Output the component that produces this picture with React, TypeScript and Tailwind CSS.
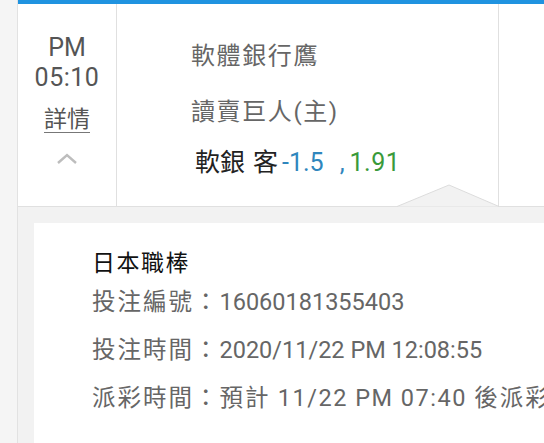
import React from "react";

const font = { fontFamily: "Roboto, 'Noto Sans CJK TC', sans-serif" };

const BetDetail = () => {
  return (
    <div className="flex w-[544px] h-[443px] overflow-hidden bg-[#f4f4f4]" style={font}>
      {/* left page edge */}
      <div className="w-[18px] shrink-0 bg-[#f5f5f5] border-r border-[#e2e2e2]" />

      <div className="flex-1 flex flex-col min-w-0">
        {/* match row */}
        <div className="flex h-[207px] shrink-0 bg-white border-t-4 border-[#1f93e0] border-b border-b-[#e0e0e0]">
          <div className="w-[99px] shrink-0 flex flex-col items-center pt-[29px] border-r border-[#e0e0e0] text-[#555]">
            <div className="text-[25px] leading-[30px]">PM</div>
            <div className="text-[25px] leading-[30px] tracking-[0.5px]">05:10</div>
            <div className="mt-[12px] text-[23px] leading-[30px] underline underline-offset-[5px] decoration-1 decoration-[#777]">詳情</div>
            <svg className="mt-[18px]" width="22" height="12" viewBox="0 0 22 12">
              <path d="M2 10 L11 2 L20 10" fill="none" stroke="#bdbdbd" strokeWidth="2.4" />
            </svg>
          </div>

          <div className="relative w-[382px] shrink-0 border-r border-[#e0e0e0] pl-[74px] pt-[34px]">
            <div className="text-[24px] leading-[36px] tracking-[1.6px] text-[#666]">軟體銀行鷹</div>
            <div className="mt-[20px] text-[24px] leading-[36px] tracking-[1.6px] text-[#666]">讀賣巨人(主)</div>
            <div className="mt-[15px] pl-[4px] text-[25px] leading-[36px] whitespace-nowrap">
              <span className="text-[#222]">軟銀</span>
              <span className="ml-[8px] text-[#222]">客</span>
              <span className="ml-[4px] text-[#2f86bd]">-1.5</span>
              <span className="ml-[16px] text-[#2f86bd]">,</span>
              <span className="ml-[5px] text-[#3a9a3a] tracking-[0.5px]">1.91</span>
            </div>
            {/* pointer into the detail panel */}
            <svg className="absolute left-[280px] bottom-[-1px]" width="102" height="23" viewBox="0 0 102 23">
              <path d="M0 22.5 L52 1 L102 22.5 Z" fill="#f2f2f2" />
              <path d="M0 22.5 L52 1 L102 22.5" fill="none" stroke="#dcdcdc" strokeWidth="1" />
            </svg>
          </div>

          <div className="flex-1" />
        </div>

        {/* detail panel */}
        <div className="flex-1 bg-[#f2f2f2] pl-[16px] pt-[16px]">
          <div className="h-full bg-white pl-[58px] pt-[27px] whitespace-nowrap">
            <div className="text-[23px] leading-[28px] tracking-[1.5px] text-[#111]">日本職棒</div>
            <div className="text-[23.5px] leading-[48px] text-[#666]">
              <span className="tracking-[2px]">投注編號：</span>16060181355403
            </div>
            <div className="text-[23.5px] leading-[48px] text-[#666]">
              <span className="tracking-[2px]">投注時間：</span>2020/11/22 PM 12:08:55
            </div>
            <div className="text-[23.5px] leading-[48px] text-[#666]">
              <span className="tracking-[2px]">派彩時間：預計</span>
              <span className="tracking-[1.5px]"> 11/22 PM 07:40 </span>
              <span className="tracking-[2px]">後派彩</span>
            </div>
          </div>
        </div>
      </div>
    </div>
  );
};

export default function App() {
  return <BetDetail />;
}
